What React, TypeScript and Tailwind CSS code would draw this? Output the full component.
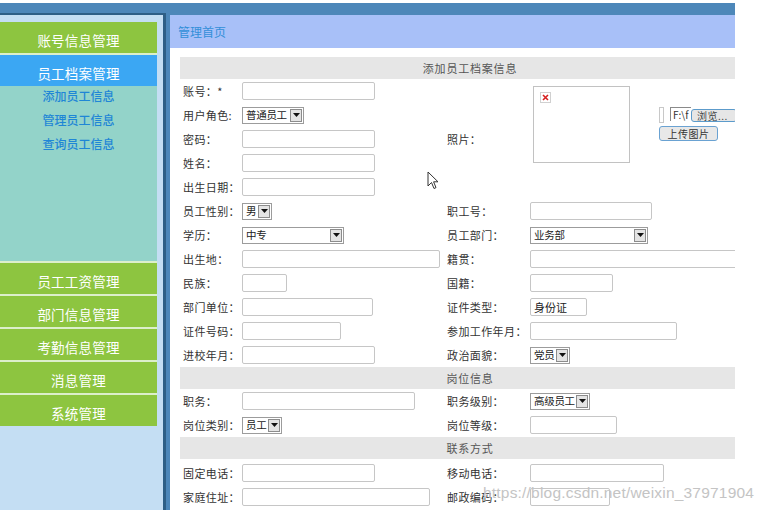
import React from "react";

function Input({ w, value }: { w: string; value?: string }) {
  return (
    <div
      className={`${w} h-[18px] border border-[#c6c6c6] rounded-[2px] bg-white flex items-center pl-[3px] text-[11px] text-[#222] shrink-0`}
    >
      {value}
    </div>
  );
}

function Select({ w, text }: { w: string; text: string }) {
  return (
    <div
      className={`${w} h-[17px] border border-[#9c9c9c] bg-white flex items-center justify-between pl-[3px] pr-[1px] shrink-0 overflow-hidden`}
    >
      <span className="text-[10.5px] text-[#222] leading-none whitespace-nowrap tracking-[-0.3px]">{text}</span>
      <span className="w-[12px] h-[13px] border border-[#8c8c8c] bg-[#e4e4e4] flex items-center justify-center shrink-0 ml-[1px]">
        <svg width="7" height="4" viewBox="0 0 7 4">
          <path d="M0 0 L7 0 L3.5 4 Z" fill="#111" />
        </svg>
      </span>
    </div>
  );
}

function Label({ children }: { children: React.ReactNode }) {
  return (
    <div className="flex items-center pl-[3px] text-[11px] text-[#333] tracking-[0.4px] whitespace-nowrap">
      {children}
    </div>
  );
}

function Val({ children }: { children?: React.ReactNode }) {
  return <div className="flex items-center">{children}</div>;
}

function Section({ title }: { title: string }) {
  return (
    <div className="h-[22px] bg-[#e6e6e6] flex items-center justify-center text-[11px] text-[#555] tracking-[0.8px]">
      {title}
    </div>
  );
}

function GreenItem({ text }: { text: string }) {
  return (
    <div className="h-[31px] bg-[#8dc540] flex items-center justify-center pt-[6px] text-[13.5px] text-white tracking-[0.2px]">
      {text}
    </div>
  );
}

export default function App() {
  return (
    <div className="w-[763px] h-[510px] bg-white relative overflow-hidden font-['Noto_Sans_CJK_SC','Noto_Sans',sans-serif]">
      <div className="mt-[3px] w-[735px] h-[507px] bg-[#4d87b9] flex">
        {/* Sidebar */}
        <div className="w-[166px] mt-[10px] bg-[#c4def3] border-t-2 border-r-[3px] border-[#2e5f86] pt-[7px]">
          <div className="w-[157px] flex flex-col">
            <GreenItem text="账号信息管理" />
            <div className="h-[2px] bg-[#dcefcb]" />
            <div className="h-[31px] bg-[#3ba7f3] flex items-center justify-center pt-[6px] text-[13.5px] text-white tracking-[0.2px]">
              员工档案管理
            </div>
            <div className="h-[175px] bg-[#93d3c9] flex flex-col items-center pt-[3px] gap-[10px] text-[12px] text-[#1f86d6] font-medium">
              <div className="h-[14px] leading-[14px]">添加员工信息</div>
              <div className="h-[14px] leading-[14px]">管理员工信息</div>
              <div className="h-[14px] leading-[14px]">查询员工信息</div>
            </div>
            {["员工工资管理", "部门信息管理", "考勤信息管理", "消息管理", "系统管理"].map((t) => (
              <React.Fragment key={t}>
                <div className="h-[2px] bg-[#dcefcb]" />
                <GreenItem text={t} />
              </React.Fragment>
            ))}
          </div>
        </div>

        {/* Main */}
        <div className="flex-1 ml-[4px] mt-[12px] flex flex-col overflow-hidden bg-white">
          <div className="h-[33px] shrink-0 bg-[#a8c0f8] flex items-center pl-[8px] text-[12px] text-[#338fd8]">
            管理首页
          </div>
          <div className="flex-1 pl-[10px] pt-[9px] overflow-hidden">
            <div className="w-[580px]">
              <Section title="添加员工档案信息" />
              <div className="grid grid-cols-[62px_202px_86px_230px] auto-rows-[24px]">
                <Label>账号：*</Label>
                <Val>
                  <Input w="w-[133px]" />
                </Val>
                <div className="row-span-5 flex items-center pl-[3px] text-[11px] text-[#333] tracking-[0.4px]">
                  照片：
                </div>
                <div className="row-span-5 flex items-start pt-[7px] pl-[3px]">
                  <div className="w-[97px] h-[77px] border border-[#c2c2c2] bg-white shrink-0 pt-[5px] pl-[6px]">
                    <div className="w-[11px] h-[11px] border border-[#d0d0d0] flex items-center justify-center">
                      <svg width="7" height="7" viewBox="0 0 7 7">
                        <path d="M1 1 L6 6 M6 1 L1 6" stroke="#d62020" strokeWidth="1.6" />
                      </svg>
                    </div>
                  </div>
                  <div className="ml-[29px] mt-[21px] flex flex-col shrink-0">
                    <div className="flex items-start">
                      <div className="w-[5px] h-[16px] border border-[#c8c8c8] bg-white" />
                      <div className="ml-[6px] w-[21px] h-[14px] border-t border-l border-[#8a8a8a] text-[10px] leading-[13px] text-[#333] pl-[2px] overflow-hidden whitespace-nowrap">
                        F:\f
                      </div>
                      <div className="mt-[2px] w-[46px] h-[13px] border border-[#5c9bcb] rounded-[3px] bg-[#e6e6e6] text-[10px] leading-[11px] text-[#444] pl-[5px] tracking-[0.5px] whitespace-nowrap">
                        浏览...
                      </div>
                    </div>
                    <div className="mt-[3px] w-[59px] h-[15px] border border-[#6aa2d2] rounded-[3px] bg-[#e8e8e8] text-[10px] leading-[13px] text-[#333] text-center tracking-[0.5px]">
                      上传图片
                    </div>
                  </div>
                </div>

                <Label>用户角色:</Label>
                <Val>
                  <Select w="w-[62px]" text="普通员工" />
                </Val>
                <Label>密码：</Label>
                <Val>
                  <Input w="w-[133px]" />
                </Val>
                <Label>姓名：</Label>
                <Val>
                  <Input w="w-[133px]" />
                </Val>
                <Label>出生日期：</Label>
                <Val>
                  <Input w="w-[133px]" />
                </Val>

                <Label>员工性别：</Label>
                <Val>
                  <Select w="w-[30px]" text="男" />
                </Val>
                <Label>职工号：</Label>
                <Val>
                  <Input w="w-[122px]" />
                </Val>

                <Label>学历：</Label>
                <Val>
                  <Select w="w-[102px]" text="中专" />
                </Val>
                <Label>员工部门：</Label>
                <Val>
                  <Select w="w-[118px]" text="业务部" />
                </Val>

                <Label>出生地：</Label>
                <Val>
                  <Input w="w-[198px]" />
                </Val>
                <Label>籍贯：</Label>
                <Val>
                  <Input w="w-[230px]" />
                </Val>

                <Label>民族：</Label>
                <Val>
                  <Input w="w-[45px]" />
                </Val>
                <Label>国籍：</Label>
                <Val>
                  <Input w="w-[83px]" />
                </Val>

                <Label>部门单位：</Label>
                <Val>
                  <Input w="w-[131px]" />
                </Val>
                <Label>证件类型：</Label>
                <Val>
                  <Input w="w-[57px]" value="身份证" />
                </Val>

                <Label>证件号码：</Label>
                <Val>
                  <Input w="w-[99px]" />
                </Val>
                <Label>参加工作年月：</Label>
                <Val>
                  <Input w="w-[147px]" />
                </Val>

                <Label>进校年月：</Label>
                <Val>
                  <Input w="w-[133px]" />
                </Val>
                <Label>政治面貌：</Label>
                <Val>
                  <Select w="w-[40px]" text="党员" />
                </Val>
              </div>

              <Section title="岗位信息" />
              <div className="grid grid-cols-[62px_202px_86px_230px] auto-rows-[24px]">
                <Label>职务：</Label>
                <Val>
                  <Input w="w-[173px]" />
                </Val>
                <Label>职务级别：</Label>
                <Val>
                  <Select w="w-[60px]" text="高级员工" />
                </Val>
                <Label>岗位类别：</Label>
                <Val>
                  <Select w="w-[40px]" text="员工" />
                </Val>
                <Label>岗位等级：</Label>
                <Val>
                  <Input w="w-[87px]" />
                </Val>
              </div>

              <Section title="联系方式" />
              <div className="grid grid-cols-[62px_202px_86px_230px] auto-rows-[24px] pt-[2px]">
                <Label>固定电话：</Label>
                <Val>
                  <Input w="w-[133px]" />
                </Val>
                <Label>移动电话：</Label>
                <Val>
                  <Input w="w-[134px]" />
                </Val>
                <Label>家庭住址：</Label>
                <Val>
                  <Input w="w-[188px]" />
                </Val>
                <Label>邮政编码：</Label>
                <Val>
                  <Input w="w-[80px]" />
                </Val>
              </div>
            </div>
          </div>
        </div>
      </div>

      {/* mouse cursor */}
      <svg className="absolute left-[427px] top-[171px]" width="12" height="19" viewBox="0 0 12 19">
        <path d="M1 1 L1 15 L4.5 11.5 L7 17.5 L9 16.6 L6.6 10.8 L11 10.8 Z" fill="white" stroke="#333" strokeWidth="1" strokeLinejoin="round" />
      </svg>

      {/* watermark */}
      <div className="absolute left-[483px] top-[481px] text-[15.5px] text-[#c4c4c4] font-['Liberation_Sans',Arial,sans-serif] tracking-[0.2px] whitespace-nowrap">
        https://blog.csdn.net/weixin_37971904
      </div>
    </div>
  );
}
